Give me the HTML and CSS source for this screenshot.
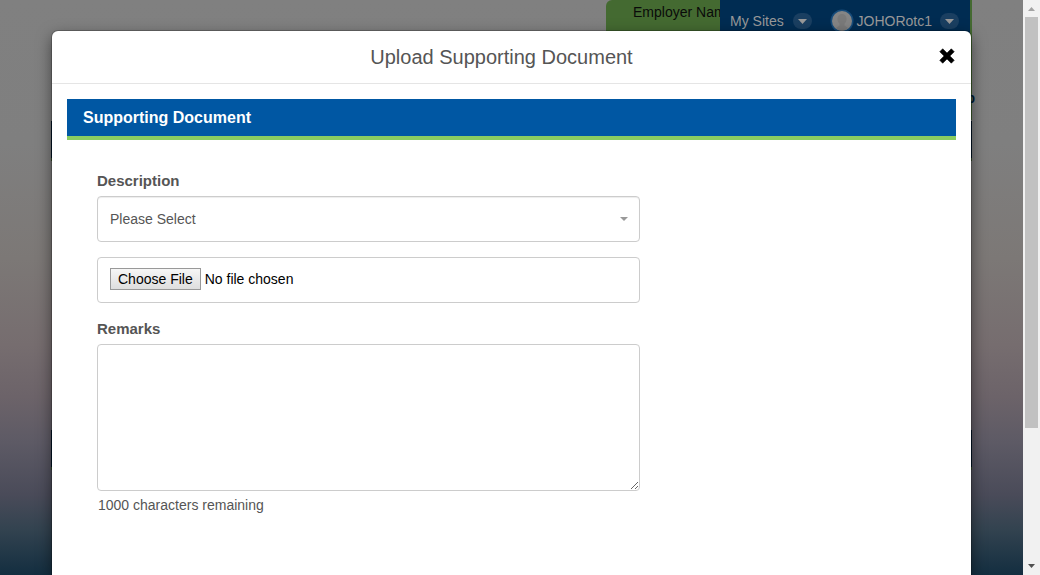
FILE: index.html
```html
<!DOCTYPE html>
<html lang="en">
<head>
<meta charset="utf-8">
<meta name="viewport" content="width=device-width, initial-scale=1">
<title>Upload Supporting Document</title>
<link rel="stylesheet" href="styles.css">
</head>
<body>
<div class="window">
  <div class="page">
    <div class="backdrop" aria-hidden="true">
      <div class="employer">
        <span class="employer-label">Employer Name</span>
        <div class="user-bar">
          <span class="user-item">My Sites
            <svg class="pill" width="19" height="16" viewBox="0 0 19 16"><rect width="19" height="16" rx="8" fill="#1a3f61"/><path d="M5 6h9l-4.500 5z" fill="#999"/></svg>
          </span>
          <span class="user-item user-account">
            <svg class="avatar" width="24" height="24" viewBox="0 0 24 24"><circle cx="12" cy="12" r="11.500" fill="#154b7a"/><circle cx="12" cy="12" r="10" fill="#858585"/><path d="M12 5c-3 0-4.500 2-4.500 5 0 2 .8 3.500 2 4.500v2L6 19c3 3.400 9 3.400 12 0l-3.500-2.500v-2c1.200-1 2-2.500 2-4.500 0-3-1.500-5-4.500-5z" fill="#7a7a7a"/></svg>
            JOHORotc1
            <svg class="pill" width="19" height="16" viewBox="0 0 19 16"><rect width="19" height="16" rx="8" fill="#1a3f61"/><path d="M5 6h9l-4.500 5z" fill="#999"/></svg>
          </span>
        </div>
      </div>
      <span class="edge-letter">p</span>
      <div class="strip strip-upper"></div>
      <div class="strip strip-lower"></div>
    </div>

    <main class="modal" role="dialog" aria-labelledby="modal-title">
      <header class="modal-header">
        <h1 class="modal-title" id="modal-title">Upload Supporting Document</h1>
        <button class="close" type="button" aria-label="Close">
          <svg width="16" height="16" viewBox="0 0 16 16"><path d="M3.700.8 8 5.100 12.300.8l2.900 2.900L10.900 8l4.300 4.300-2.900 2.900L8 10.900l-4.300 4.300-2.900-2.900L5.100 8 .8 3.700z" fill="#000" stroke="#000" stroke-width=".6" stroke-linejoin="round"/></svg>
        </button>
      </header>
      <div class="modal-body">
        <h2 class="banner">Supporting Document</h2>
        <form class="form">
          <div class="column">
            <div class="group">
              <label class="label" for="description">Description</label>
              <div class="select-wrap">
                <select class="control select" id="description"><option>Please Select</option></select>
                <svg class="caret" width="8" height="4" viewBox="0 0 8 4"><path d="M0 0h8L4 4z" fill="#999"/></svg>
              </div>
            </div>
            <div class="group">
              <input class="control file" type="file" aria-label="Supporting file">
            </div>
            <div class="group">
              <label class="label" for="remarks">Remarks</label>
              <textarea class="control remarks" id="remarks"></textarea>
              <p class="counter">1000 characters remaining</p>
            </div>
          </div>
        </form>
      </div>
    </main>
  </div>

  <div class="scrollbar" aria-hidden="true">
    <svg class="arrow" width="17" height="17" viewBox="0 0 17 17"><path d="M5 11h7L8.500 7z" fill="#a3a3a3"/></svg>
    <div class="track"><div class="thumb"></div></div>
    <svg class="arrow" width="17" height="17" viewBox="0 0 17 17"><path d="M5 6h7l-3.500 4z" fill="#505050"/></svg>
  </div>
</div>
</body>
</html>
```

FILE: styles.css
```css
* {
  box-sizing: border-box;
}

body {
  margin: 0;
  font-family: "Liberation Sans", Arial, sans-serif;
  font-size: 14px;
  line-height: 20px;
  color: #555;
}

svg {
  display: block;
  flex: none;
}

.window {
  display: flex;
  height: 100vh;
  overflow: hidden;
}

.page {
  position: relative;
  display: flex;
  flex: 1;
  flex-direction: column;
  min-width: 0;
  padding: 31px 52px 0;
  background: linear-gradient(#808080 0%, #7f7f7f 25%, #7c7876 45%, #766d6f 60%, #6c6369 69%, #5d5a65 77%, #4a4b59 86%, #334350 92%, #132e40 100%);
}

/* Dimmed page behind the dialog */
.backdrop {
  position: absolute;
  inset: 0 51px;
}

.employer {
  display: flex;
  justify-content: space-between;
  width: 366px;
  height: 120px;
  margin-left: auto;
  padding: 0 2px 0 27px;
  border-radius: 6px 0 0 0;
  background: #446a31;
  color: #0a0a0a;
}

.employer-label {
  flex: 1;
  min-width: 0;
  padding-top: 2px;
  white-space: nowrap;
}

.user-bar {
  position: relative;
  display: flex;
  flex: none;
  justify-content: space-between;
  width: 250px;
  height: 42px;
  padding: 0 11px 0 10px;
  background: #002c52;
  color: #999;
}

.user-item {
  display: flex;
  align-items: center;
  gap: 9px;
}

.user-account {
  gap: 3px;
}

.user-account .pill {
  margin-left: 5px;
}

.edge-letter {
  position: absolute;
  top: 88px;
  right: -3px;
  color: #001c33;
  font-weight: bold;
}

.strip {
  position: absolute;
  left: 0;
  right: 0;
  height: 40px;
  border-bottom: 3px solid #35502a;
  background: #001629;
}

.strip-upper {
  top: 121px;
}

.strip-lower {
  top: 430px;
}

.modal {
  position: relative;
  flex: 1;
  border-radius: 6px 6px 0 0;
  background: #fff;
  box-shadow: 0 5px 15px rgba(0, 0, 0, 0.5), 0 0 0 1px rgba(0, 0, 0, 0.2);
}

.modal-header {
  display: grid;
  grid-template-columns: 16px 1fr 16px;
  align-items: center;
  height: 53px;
  padding: 0 16px 2px;
  border-bottom: 1px solid #e5e5e5;
}

.modal-title {
  grid-column: 2;
  margin: 0;
  padding: 2px 20px 0 0;
  font-size: 20px;
  font-weight: normal;
  line-height: 24px;
  text-align: center;
}

.close {
  padding: 0;
  border: 0;
  background: none;
}

.modal-body {
  padding: 15px;
}

.banner {
  margin: 0;
  padding: 9px 16px 8px;
  border-bottom: 4px solid #89cc61;
  background: #0057a3;
  color: #fff;
  font-size: 16px;
  line-height: 20px;
}

.form {
  padding: 31px 15px 0;
}

.column {
  display: flex;
  flex-direction: column;
  gap: 15px;
  width: 66.667%;
  padding: 0 15px;
}

.label {
  display: block;
  margin-bottom: 5px;
  font-size: 15px;
  font-weight: bold;
}

.control {
  display: block;
  width: 100%;
  height: 46px;
  margin: 0;
  padding: 0 12px;
  border: 1px solid #ccc;
  border-radius: 4px;
  background: #fff;
  color: #555;
  font: inherit;
}

.select-wrap {
  position: relative;
}

.select {
  appearance: none;
  box-shadow: inset 0 1px 1px rgba(0, 0, 0, 0.075);
}

.caret {
  position: absolute;
  top: 21px;
  right: 12px;
  pointer-events: none;
}

.file {
  margin-bottom: 1px;
  padding: 10px 12px;
  color: #000;
}

.file::file-selector-button {
  height: 22px;
  margin: 0 4px 0 0;
  padding: 0 7px;
  border: 1px solid #999;
  border-radius: 0;
  background: linear-gradient(#f6f6f6, #dedede);
  color: #000;
  font: inherit;
}

.remarks {
  height: 147px;
  padding: 10px 12px;
  resize: both;
}

.counter {
  margin: 4px 0 0;
  padding-left: 1px;
}

.scrollbar {
  display: flex;
  flex: none;
  flex-direction: column;
  width: 17px;
  background: #f1f1f1;
}

.track {
  flex: 1;
  padding: 0 2px;
}

.thumb {
  height: 76%;
  background: #c1c1c1;
}
```
